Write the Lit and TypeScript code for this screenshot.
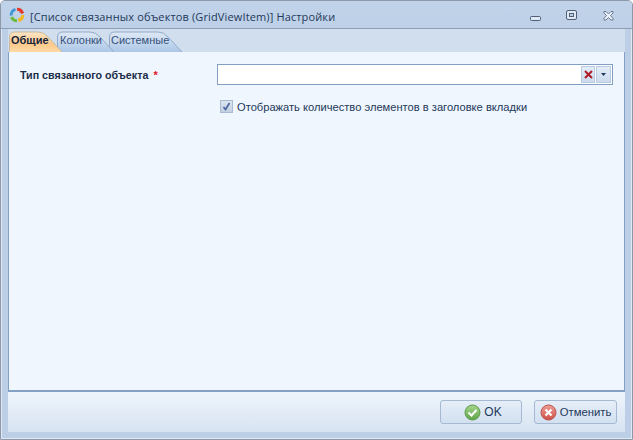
import { LitElement, html, css, svg } from "lit";
import { customElement } from "lit/decorators.js";

const tabShape = (w: number, active: boolean, id: string) => svg`
<svg class="shape" width=${w} height="24" viewBox="0 0 ${w} 24">
  <defs><linearGradient id=${id} x1="0" y1="0" x2="0" y2="1">
    ${active
      ? svg`<stop offset="0" stop-color="#fbe6c6"/><stop offset=".55" stop-color="#fdc98a"/><stop offset="1" stop-color="#ffdca8"/>`
      : svg`<stop offset="0" stop-color="#dfe9f5"/><stop offset="1" stop-color="#a9c5e6"/>`}
  </linearGradient></defs>
  <path d="M.5 24V8Q.5 3 6 3H${w - 26}Q${w - 20} 3 ${w - 16} 8L${w - 1} 24Z" fill="url(#${id})" stroke=${active ? "#c9b9a0" : "#92aac8"}/>
</svg>`;

@customElement("app-root")
export class AppRoot extends LitElement {
  static styles = css`
    :host { display: block; width: 633px; height: 440px; font-family: "Liberation Sans", Arial, sans-serif; font-size: 11px; color: #1e395b; }
    .win { box-sizing: border-box; width: 633px; height: 440px; border: 1px solid #8d99a8; border-radius: 5px 5px 0 0; background: #bccfe6; box-shadow: inset 1px 0 0 #dfe8f3, inset -1px 0 0 #dfe8f3, inset 0 -1px 0 #dfe8f3; display: flex; flex-direction: column; overflow: hidden; }
    .title { height: 28px; flex: none; display: flex; align-items: center; background: linear-gradient(#c0d3e9, #bdd0e7); border-bottom: 1px solid #8d9fb5; box-sizing: border-box; padding-left: 8px; }
    .logo { width: 16px; height: 16px; flex: none; margin-right: 5px; margin-top: 1px; }
    .ttext { font-family: "Open Sans", "Liberation Sans", sans-serif; font-size: 11px; color: #1e395b; white-space: nowrap; flex: 1; letter-spacing: .012em; padding-top: 3px; }
    .wbtns { display: flex; align-items: center; padding-right: 18px; padding-top: 3px; }
    .wbtns svg { display: block; }
    .mid { flex: 1; display: flex; flex-direction: column; margin: 0 7px 0 7px; min-height: 0; }
    .strip { height: 23px; flex: none; display: flex; background: #d0deee; padding-left: 1px; overflow: hidden; }
    .tab { position: relative; height: 24px; padding: 5px 0 0 2px; box-sizing: border-box; color: #35507a; white-space: nowrap; font-size: 11px; }
    .tab .lbl { position: relative; }
    .shape { position: absolute; left: 0; top: 0; }
    .tab.a { width: 55px; z-index: 3; font-weight: bold; color: #15233a; margin-right: -7px; }
    .tab.b { width: 59px; z-index: 2; padding-left: 3px; margin-right: -7px; }
    .tab.c { width: 75px; z-index: 1; padding-left: 2px; }
    .panel { flex: 1; background: #eff6fe; border: 1px solid #84a0c2; border-width: 0 1px 2px 1px; box-sizing: border-box; display: flex; flex-direction: column; padding: 12px 11px 0 11px; min-height: 0; }
    .row { display: flex; align-items: center; height: 21px; flex: none; }
    .label { width: 197px; flex: none; font-weight: bold; font-size: 10.7px; color: #1b2c48; }
    .star { color: #e3131d; font-size: 11px; margin-left: 2px; }
    .field { flex: 1; height: 21px; box-sizing: border-box; border: 1px solid #829ec2; background: #fff; display: flex; justify-content: flex-end; align-items: stretch; padding: 1px; gap: 1px; }
    .fb { width: 14px; background: linear-gradient(#e4edf7, #cbdbed); border: 1px solid #b9cbe0; box-sizing: border-box; display: flex; align-items: center; justify-content: center; }
    .fb.d { width: 15px; }
    .check { display: flex; align-items: center; gap: 4px; margin: 15px 0 0 200px; font-size: 11.15px; color: #1e395b; white-space: nowrap; }
    .box { width: 13px; height: 13px; box-sizing: border-box; border: 1px solid #a8bbd3; background: linear-gradient(#dce5ef, #c3d0e0); display: flex; align-items: center; justify-content: center; flex: none; }
    .foot { height: 40px; flex: none; background: linear-gradient(#eff5fc, #d6e3f1); display: flex; justify-content: flex-end; align-items: center; gap: 12px; padding: 0 8px 0 0; box-sizing: border-box; }
    .btn { height: 24px; box-sizing: border-box; border: 1px solid #a5b9d3; border-radius: 3px; background: linear-gradient(#e6eef8, #d2e0f0); display: flex; align-items: center; justify-content: center; gap: 3px; font-size: 11.3px; color: #1e395b; }
    .btn.ok { width: 82px; font-size: 12px; padding-left: 4px; }
    .btn.cancel { width: 83px; }
    .bottom { height: 7px; flex: none; }
  `;

  render() {
    return html`<div class="win">
      <div class="title">
        <svg class="logo" viewBox="0 0 16 16" fill="none" stroke-width="3">
          <path d="M8 2.2A5.8 5.8 0 0 1 13.6 6.5" stroke="#e23b2e"/>
          <path d="M13.7 8A5.8 5.8 0 0 1 9.5 13.6" stroke="#f2b622"/>
          <path d="M8 13.8A5.8 5.8 0 0 1 2.6 10" stroke="#6cbb3c"/>
          <path d="M2.2 8.5A5.8 5.8 0 0 1 6.5 2.4" stroke="#3f97d6"/>
          <path d="M11.5 1.5L14.5 5.6L10.5 6Z" fill="#e23b2e" stroke="none"/>
          <path d="M14.5 10.5L9.8 14.9L9.4 10.7Z" fill="#f2b622" stroke="none"/>
        </svg>
        <span class="ttext">[Список связанных объектов (GridViewItem)] Настройки</span>
        <div class="wbtns">
          <svg width="36" height="14" viewBox="0 0 36 14"><rect x="0.5" y="7.5" width="10" height="4" rx="1" fill="#dfe8f3" stroke="#4f5f78"/></svg>
          <svg width="37" height="14" viewBox="0 0 37 14"><rect x="0.5" y="1.5" width="10" height="9" rx="1.5" fill="#dfe8f3" stroke="#4f5f78"/><rect x="3.5" y="4.5" width="4" height="3" fill="#bdd0e7" stroke="#4f5f78"/></svg>
          <svg width="11" height="14" viewBox="0 0 11 14"><path d="M1 2.5H3L5.5 5L8 2.5H10V4L7.5 6.5L10 9.5V11H8L5.5 8.5L3 11H1V9.5L3.5 6.5L1 4Z" fill="#eef3f9" stroke="#4f5f78" stroke-width=".8"/></svg>
        </div>
      </div>
      <div class="mid">
        <div class="strip">
          <div class="tab a">${tabShape(55, true, "ga")}<span class="lbl">Общие</span></div>
          <div class="tab b">${tabShape(59, false, "gb")}<span class="lbl">Колонки</span></div>
          <div class="tab c">${tabShape(75, false, "gc")}<span class="lbl">Системные</span></div>
        </div>
        <div class="panel">
          <div class="row">
            <div class="label">Тип связанного объекта<span class="star"> *</span></div>
            <div class="field">
              <div class="fb"><svg width="9" height="9" viewBox="0 0 9 9"><path d="M1 1L8 8M8 1L1 8" stroke="#b01d28" stroke-width="2"/></svg></div>
              <div class="fb d"><svg width="5" height="3" viewBox="0 0 5 3"><path d="M0 0H5L2.5 3Z" fill="#1e395b"/></svg></div>
            </div>
          </div>
          <div class="check">
            <span class="box"><svg width="9" height="9" viewBox="0 0 9 9"><path d="M1.5 5L3.5 7.5L7.5 1" fill="none" stroke="#4a68a0" stroke-width="1.7"/></svg></span>
            <span>Отображать количество элементов в заголовке вкладки</span>
          </div>
        </div>
        <div class="foot">
          <div class="btn ok"><svg width="17" height="17" viewBox="0 0 17 17"><defs><linearGradient id="gk" x1="0" y1="0" x2="0" y2="1"><stop offset="0" stop-color="#a6d58c"/><stop offset="1" stop-color="#5ea548"/></linearGradient></defs><circle cx="8.5" cy="8.5" r="7.5" fill="url(#gk)" stroke="#5c9a4a"/><path d="M4.5 8.5L7.5 11.5L12.5 6" fill="none" stroke="#fff" stroke-width="2"/></svg><span>OK</span></div>
          <div class="btn cancel"><svg width="17" height="17" viewBox="0 0 17 17"><defs><linearGradient id="gc2" x1="0" y1="0" x2="0" y2="1"><stop offset="0" stop-color="#ee9f97"/><stop offset="1" stop-color="#cf4f48"/></linearGradient></defs><circle cx="8.5" cy="8.5" r="7.5" fill="url(#gc2)" stroke="#b9524c"/><path d="M5.5 5.5L11.5 11.5M11.5 5.5L5.5 11.5" stroke="#fff" stroke-width="2.2"/></svg><span>Отменить</span></div>
        </div>
        <div class="bottom"></div>
      </div>
    </div>`;
  }
}
